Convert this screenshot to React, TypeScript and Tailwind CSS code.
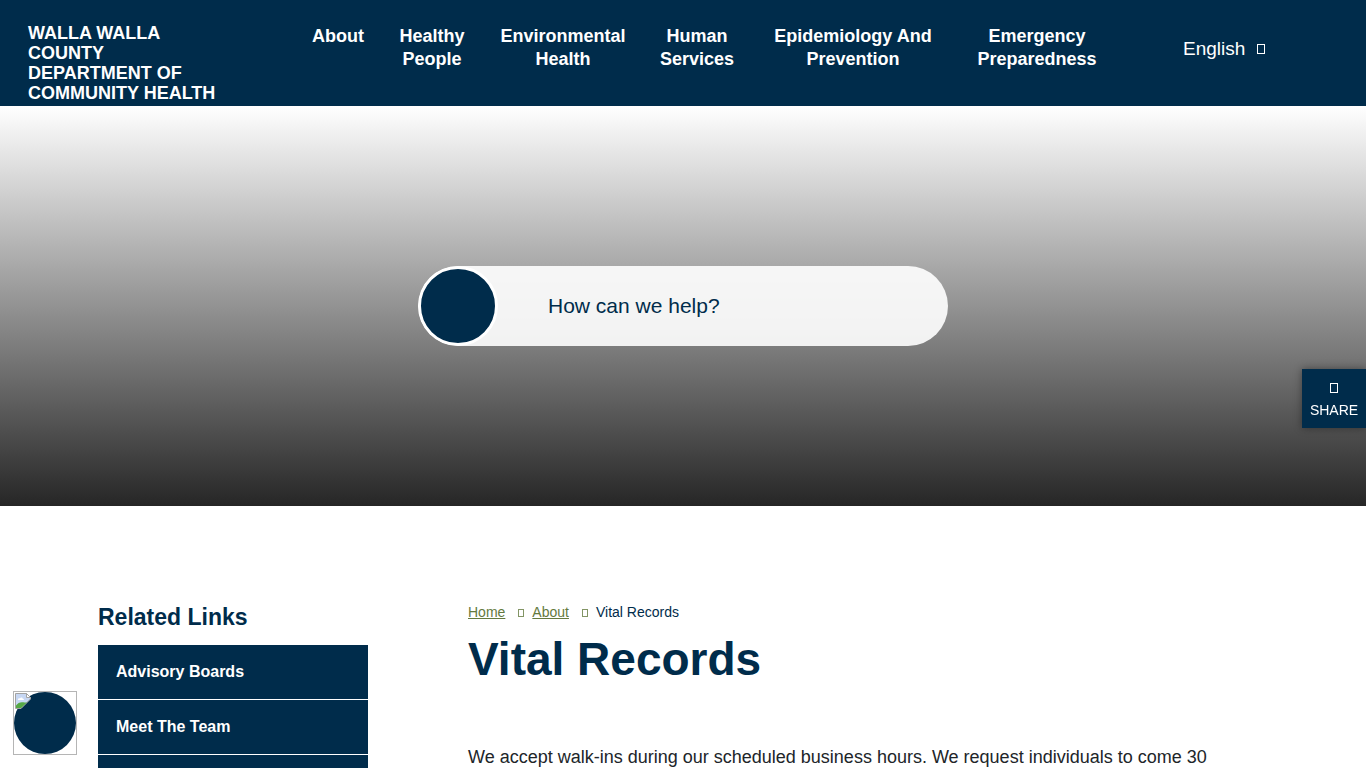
import { useState } from "react";

const navItems = [
  { lines: ["About"], href: "#about" },
  { lines: ["Healthy", "People"], href: "#healthy-people" },
  { lines: ["Environmental", "Health"], href: "#environmental-health" },
  { lines: ["Human", "Services"], href: "#human-services" },
  { lines: ["Epidemiology And", "Prevention"], href: "#epidemiology" },
  { lines: ["Emergency", "Preparedness"], href: "#emergency" },
];

const relatedLinks = ["Advisory Boards", "Meet The Team"];

function Header() {
  return (
    <header className="flex items-start bg-[#002c4b] pb-[3px] text-white">
      <a
        href="#home"
        className="ml-7 mt-[23px] w-[266px] shrink-0 pr-16 text-[18px] font-bold leading-5"
      >
        WALLA WALLA COUNTY
        <br />
        DEPARTMENT OF COMMUNITY HEALTH
      </a>

      <nav className="mt-[25px] flex-1">
        <ul className="grid grid-cols-[88fr_100fr_162fr_106fr_206fr_162fr]">
          {navItems.map((item) => (
            <li key={item.href} className="text-center">
              <a href={item.href} className="text-[18px] font-bold leading-[23px]">
                {item.lines.map((line) => (
                  <span key={line} className="block whitespace-nowrap">
                    {line}
                  </span>
                ))}
              </a>
            </li>
          ))}
        </ul>
      </nav>

      <div className="mt-[37px] flex w-[248px] shrink-0 items-center gap-[11px] pl-[65px]">
        <select
          aria-label="Language"
          className="cursor-pointer appearance-none bg-transparent text-[19px] leading-6"
        >
          <option>English</option>
        </select>
        <span className="h-[10px] w-2 border border-white" />
      </div>
    </header>
  );
}

function Hero() {
  const [query, setQuery] = useState("");

  return (
    <section className="flex h-[400px] items-center justify-center bg-[linear-gradient(to_bottom,#ffffff,#262626)]">
      <form
        role="search"
        onSubmit={(e) => e.preventDefault()}
        className="flex h-20 w-[530px] items-center overflow-hidden rounded-full bg-white/90"
      >
        <button
          type="submit"
          aria-label="Search"
          className="h-20 w-20 shrink-0 rounded-full border-3 border-white bg-[#002c4b]"
        />
        <input
          type="text"
          aria-label="How can we help?"
          placeholder="How can we help?"
          value={query}
          onChange={(e) => setQuery(e.target.value)}
          className="h-full w-full bg-transparent pl-[50px] pr-10 text-[21px] text-[#002c4b] outline-none placeholder:text-[#002c4b]"
        />
      </form>
    </section>
  );
}

function Sidebar() {
  return (
    <aside className="w-[270px] shrink-0">
      <h2 className="text-[23px] font-bold leading-7 text-[#002c4b]">Related Links</h2>
      <ul className="mt-[14px]">
        {relatedLinks.map((label) => (
          <li key={label} className="border-b border-white bg-[#002c4b]">
            <a
              href="#related"
              className="block px-[18px] py-[15px] text-base font-bold leading-6 text-white"
            >
              {label}
            </a>
          </li>
        ))}
        <li className="h-[54px] bg-[#002c4b]" />
      </ul>
    </aside>
  );
}

function Separator() {
  return <span className="ml-[13px] mr-2 mt-[2px] h-2 w-[6px] border border-[#647a3e]/80" />;
}

function Breadcrumb() {
  return (
    <nav aria-label="Breadcrumb">
      <ol className="flex items-center text-sm leading-[18px] text-[#002c4b]">
        <li className="flex items-center">
          <a href="#home" className="text-[#647a3e] underline">
            Home
          </a>
          <Separator />
        </li>
        <li className="flex items-center">
          <a href="#about" className="text-[#647a3e] underline">
            About
          </a>
          <Separator />
        </li>
        <li aria-current="page">Vital Records</li>
      </ol>
    </nav>
  );
}

/* Missing-picture glyph: a torn page with sky, cloud and hill */
function BrokenImageIcon() {
  return (
    <svg className="h-4 w-4" viewBox="0 0 16 16" fill="none">
      <path d="M0.5 0.5H11.5L15.5 4.5V6L6 15.5H0.5Z" fill="#c7d7f3" stroke="#a3a3a3" />
      <path d="M1 15V12.5C3 9.5 6 8.5 9.5 9.5L12 9.5L6 15Z" fill="#55a845" />
      <path d="M3 6.5C3 5.3 4.4 4.8 5 5.4C5.5 4.2 7.6 4.4 7.7 5.7C8.7 5.5 9 6.2 9 7H3Z" fill="#fff" />
      <path d="M11.5 0.5V4.5H15.5Z" fill="#fff" stroke="#a3a3a3" />
    </svg>
  );
}

export default function App() {
  return (
    <div className="bg-white font-['Liberation_Sans',Arial,sans-serif]">
      <Header />
      <Hero />

      <main className="flex gap-[100px] px-[98px] pt-[97px]">
        <Sidebar />
        <article className="min-w-0 flex-1">
          <Breadcrumb />
          <h1 className="mt-[10px] text-[46px] font-bold leading-[56px] text-[#002c4b]">
            Vital Records
          </h1>
          <p className="mt-14 text-[18px] leading-7 text-[#212529]">
            We accept walk-ins during our scheduled business hours. We request individuals to come 30
          </p>
        </article>
      </main>

      <button
        type="button"
        className="fixed right-0 top-[48%] flex h-[59px] w-16 flex-col items-center bg-[#002c4b] pt-[14px] text-sm leading-5 text-white shadow-[0_0_8px_rgba(0,0,0,0.4)]"
      >
        <span className="mb-[7px] h-[10px] w-2 shrink-0 border border-white" />
        SHARE
      </button>

      <button
        type="button"
        aria-label="Chat"
        className="fixed bottom-[13px] left-[13px] h-16 w-16 border border-[#b5b5b5]"
      >
        <span className="block h-full rounded-full bg-[#002c4b]" />
        <span className="absolute left-px top-px">
          <BrokenImageIcon />
        </span>
      </button>
    </div>
  );
}
